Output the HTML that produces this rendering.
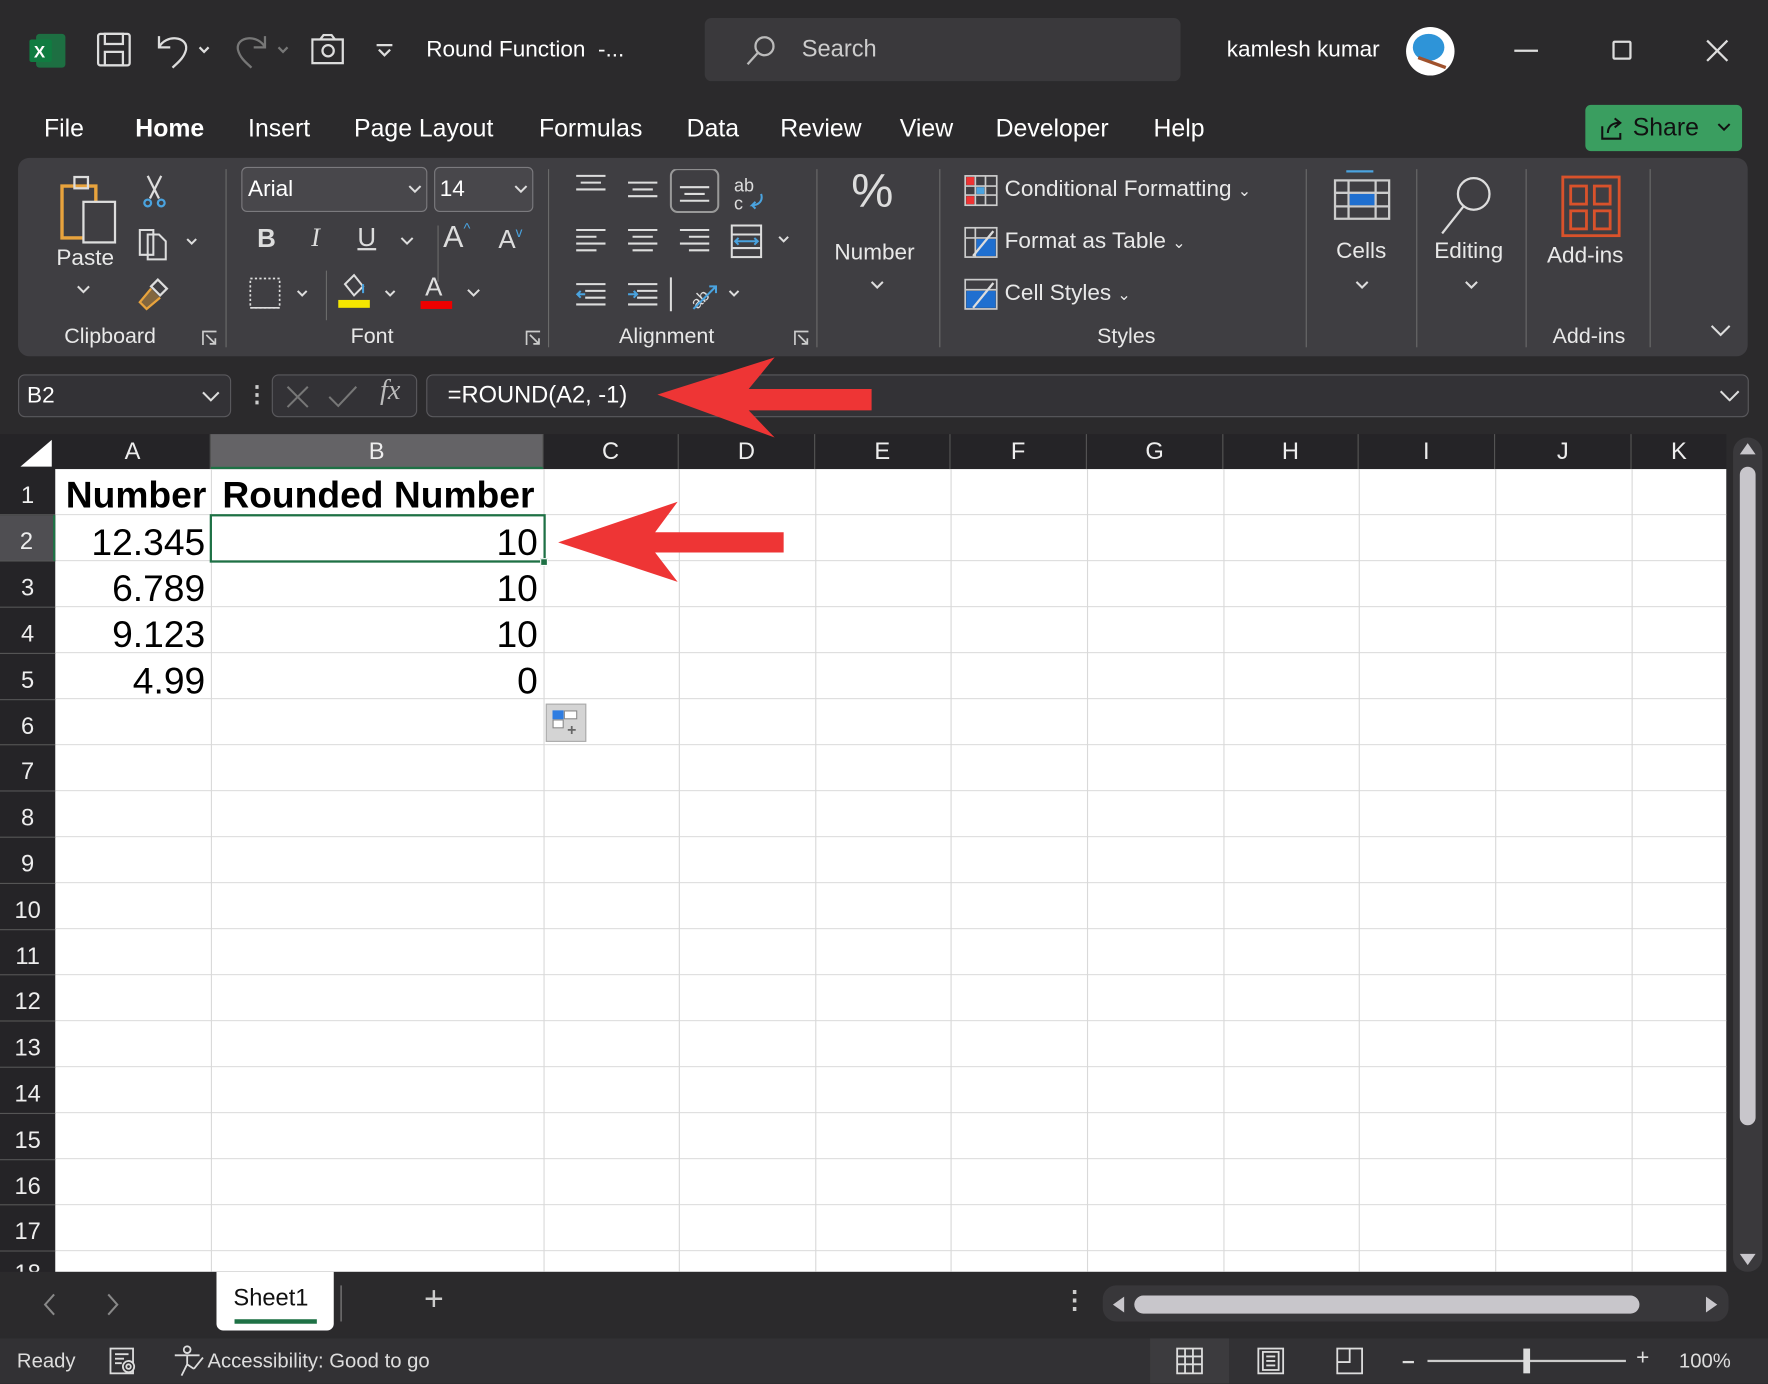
<!DOCTYPE html><html><head><meta charset="utf-8"><style>
*{box-sizing:border-box;margin:0;padding:0}
html,body{width:1768px;height:1384px;overflow:hidden;background:#2b2a2c}
#w{position:absolute;left:0;top:0;width:1568px;height:1227px;transform:scale(1.12755);transform-origin:0 0;background:#2b2a2c;font-family:"Segoe UI","Liberation Sans",sans-serif;color:#fff;overflow:hidden}
.a{position:absolute}
.t{position:absolute;white-space:nowrap}
.m{font-size:22px;top:101px}
.rl{font-size:19px;color:#e8e8e8}
.sep{position:absolute;width:1px;background:#6a6a6a}
.ch{position:absolute;top:385px;height:31px;font-size:21px;text-align:center;line-height:31px;color:#eee;border-right:1px solid #555}
.rh{position:absolute;left:0;width:49px;font-size:21px;text-align:center;color:#eee;border-bottom:1px solid #555}
.c{position:absolute;font-family:"Liberation Sans",Arial,sans-serif;font-size:33px;color:#000;text-align:right;line-height:41px}
</style></head><body><div id="w">
<svg class="a" style="left:26px;top:28px" width="34" height="34"><rect x="6" y="2" width="26" height="30" rx="3" fill="#1d6f42"/><rect x="0" y="7" width="20" height="20" rx="2" fill="#107c41"/><text x="4" y="23" font-size="15" font-family="Liberation Sans" font-weight="bold" fill="#fff">X</text></svg>
<svg class="a" style="left:85px;top:28px" width="32" height="32" fill="none" stroke="#ddd" stroke-width="2"><rect x="2" y="2" width="28" height="28" rx="2"/><rect x="8" y="2" width="16" height="9"/><rect x="8" y="18" width="16" height="12"/></svg>
<svg class="a" style="left:137px;top:28px" width="55" height="34" fill="none" stroke="#ddd" stroke-width="2"><path d="M4 4v10h10M4 14C10 2 30 4 28 16c-2 8-8 12-12 16"/><path d="M40 14l4 4 4-4"/></svg>
<svg class="a" style="left:207px;top:28px" width="55" height="34" fill="none" stroke="#777" stroke-width="2"><path d="M28 4v10H18M28 14C22 2 2 4 4 16c2 8 8 12 12 16"/><path d="M40 14l4 4 4-4"/></svg>
<svg class="a" style="left:276px;top:30px" width="30" height="28" fill="none" stroke="#ddd" stroke-width="2"><rect x="1" y="5" width="27" height="21"/><path d="M8 5l3-4h7l3 4"/><circle cx="15" cy="15" r="5"/></svg>
<svg class="a" style="left:333px;top:38px" width="16" height="14" fill="none" stroke="#ddd" stroke-width="2"><path d="M1 2h14M3 6l5 5 5-5"/></svg>
<div class="t" style="left:378px;top:33px;font-size:20px">Round Function&nbsp; -...</div>
<div class="a" style="left:625px;top:16px;width:422px;height:56px;background:#3a393c;border-radius:6px"></div>
<svg class="a" style="left:660px;top:30px" width="30" height="30" fill="none" stroke="#bbb" stroke-width="2"><circle cx="18" cy="11" r="8"/><path d="M12 17L3 27"/></svg>
<div class="t" style="left:711px;top:32px;font-size:21px;color:#ccc">Search</div>
<div class="t" style="left:1088px;top:33px;font-size:20px">kamlesh kumar</div>
<div class="a" style="left:1247px;top:24px;width:43px;height:43px;border-radius:50%;background:#fff;overflow:hidden"><div class="a" style="left:6px;top:6px;width:28px;height:24px;border-radius:50%;background:#2e94d8"></div><div class="a" style="left:10px;top:30px;width:26px;height:3px;background:#a0522d;transform:rotate(20deg)"></div></div>
<div class="a" style="left:1343px;top:44px;width:21px;height:2px;background:#ddd"></div>
<div class="a" style="left:1430px;top:36px;width:17px;height:17px;border:2px solid #ddd;border-radius:2px"></div>
<svg class="a" style="left:1513px;top:35px" width="20" height="20" stroke="#ddd" stroke-width="2"><path d="M1 1l18 18M19 1L1 19"/></svg>
<div class="t m" style="left:39px">File</div>
<div class="t m" style="left:120px;font-weight:bold">Home</div>
<div class="a" style="left:120px;top:146px;width:66px;height:3px;background:#4fa86e;border-radius:2px"></div>
<div class="t m" style="left:220px">Insert</div>
<div class="t m" style="left:314px">Page Layout</div>
<div class="t m" style="left:478px">Formulas</div>
<div class="t m" style="left:609px">Data</div>
<div class="t m" style="left:692px">Review</div>
<div class="t m" style="left:798px">View</div>
<div class="t m" style="left:883px">Developer</div>
<div class="t m" style="left:1023px">Help</div>
<div class="a" style="left:1406px;top:93px;width:139px;height:41px;background:#3a9e60;border-radius:5px"></div>
<svg class="a" style="left:1418px;top:102px" width="24" height="24" fill="none" stroke="#111" stroke-width="1.8"><path d="M3 10v11h16v-5M8 16c0-6 4-9 10-9M14 3l5 4-5 4"/></svg>
<div class="t" style="left:1448px;top:100px;font-size:22px;color:#111">Share</div>
<svg class="a" style="left:1523px;top:109px" width="12" height="8" fill="none" stroke="#111" stroke-width="1.8"><path d="M1 1l5 5 5-5"/></svg>
<div class="a" style="left:16px;top:140px;width:1534px;height:176px;background:#3f3e42;border-radius:10px"></div>
<svg class="a" style="left:52px;top:155px" width="54" height="62" fill="none"><rect x="3" y="10" width="30" height="46" stroke="#e8a33d" stroke-width="3"/><rect x="14" y="2" width="12" height="10" stroke="#ddd" stroke-width="2"/><rect x="22" y="24" width="28" height="36" fill="#3f3e42" stroke="#ddd" stroke-width="2"/></svg>
<div class="t rl" style="left:50px;top:218px;font-size:20px">Paste</div>
<svg class="a" style="left:68px;top:253px" width="12" height="8" fill="none" stroke="#ddd" stroke-width="1.8"><path d="M1 1l5 5 5-5"/></svg>
<svg class="a" style="left:125px;top:155px" width="24" height="30" fill="none" stroke-width="2"><path d="M6 1l10 20M18 1L8 21" stroke="#ddd"/><circle cx="6" cy="25" r="3" stroke="#4aa3df"/><circle cx="18" cy="25" r="3" stroke="#4aa3df"/></svg>
<svg class="a" style="left:122px;top:200px" width="58" height="32" fill="none" stroke="#ddd" stroke-width="1.8"><path d="M2 4h12v22H2z"/><path d="M9 8h10l6 6v16H9z"/><path d="M44 12l4 4 4-4"/></svg>
<svg class="a" style="left:122px;top:244px" width="30" height="32" fill="none" stroke-width="2"><path d="M18 4l8 8-6 6-8-8z" stroke="#ddd"/><path d="M12 12L2 24l6 6 12-10" stroke="#e8a33d" fill="#e8a33d" fill-opacity=".4"/></svg>
<div class="t rl" style="left:57px;top:288px">Clipboard</div>
<svg class="a" style="left:179px;top:293px" width="14" height="14" fill="none" stroke="#ccc" stroke-width="1.5"><path d="M1 13V1h12M4 4l8 8M7 12h5V7"/></svg>
<div class="sep" style="left:200px;top:150px;height:158px"></div>
<div class="a" style="left:214px;top:148px;width:165px;height:40px;border:1.5px solid #7b7a7e;border-radius:5px;background:#48474b"></div>
<div class="t" style="left:220px;top:157px;font-size:20px">Arial</div>
<svg class="a" style="left:362px;top:164px" width="12" height="8" fill="none" stroke="#ddd" stroke-width="1.8"><path d="M1 1l5 5 5-5"/></svg>
<div class="a" style="left:385px;top:148px;width:88px;height:40px;border:1.5px solid #7b7a7e;border-radius:5px;background:#48474b"></div>
<div class="t" style="left:390px;top:157px;font-size:20px">14</div>
<svg class="a" style="left:456px;top:164px" width="12" height="8" fill="none" stroke="#ddd" stroke-width="1.8"><path d="M1 1l5 5 5-5"/></svg>
<div class="t" style="left:228px;top:198px;font-size:23px;font-weight:bold;color:#ddd">B</div>
<div class="t" style="left:276px;top:198px;font-size:23px;font-style:italic;color:#ddd;font-family:'Liberation Serif',serif">I</div>
<div class="t" style="left:317px;top:197px;font-size:23px;color:#ddd;text-decoration:underline">U</div>
<svg class="a" style="left:355px;top:210px" width="12" height="8" fill="none" stroke="#ddd" stroke-width="1.8"><path d="M1 1l5 5 5-5"/></svg>
<div class="sep" style="left:388px;top:200px;height:50px"></div>
<div class="t" style="left:393px;top:195px;font-size:27px;color:#ddd">A<span style="font-size:13px;vertical-align:top;color:#4aa3df">^</span></div>
<div class="t" style="left:442px;top:199px;font-size:23px;color:#ddd">A<span style="font-size:12px;vertical-align:top;color:#4aa3df">v</span></div>
<svg class="a" style="left:220px;top:244px" width="56" height="32" fill="none" stroke="#ddd" stroke-width="1.5"><rect x="2" y="3" width="26" height="26" stroke-dasharray="2 2"/><path d="M2 29h26"/><path d="M44 14l4 4 4-4" stroke-width="1.8"/></svg>
<div class="sep" style="left:289px;top:240px;height:44px"></div>
<svg class="a" style="left:298px;top:242px" width="60" height="34" fill="none" stroke="#ddd" stroke-width="1.8"><path d="M8 10l8-8 8 10-8 8z"/><path d="M24 10v8" stroke="#4aa3df"/><rect x="2" y="24" width="28" height="7" fill="#f5e600" stroke="none"/><path d="M44 16l4 4 4-4"/></svg>
<div class="t" style="left:377px;top:241px;font-size:23px;color:#ddd">A</div>
<div class="a" style="left:373px;top:267px;width:28px;height:7px;background:#e00"></div>
<svg class="a" style="left:414px;top:256px" width="12" height="8" fill="none" stroke="#ddd" stroke-width="1.8"><path d="M1 1l5 5 5-5"/></svg>
<div class="t rl" style="left:311px;top:288px">Font</div>
<svg class="a" style="left:466px;top:293px" width="14" height="14" fill="none" stroke="#ccc" stroke-width="1.5"><path d="M1 13V1h12M4 4l8 8M7 12h5V7"/></svg>
<div class="sep" style="left:486px;top:150px;height:158px"></div>
<svg class="a" style="left:505px;top:150px" width="200" height="130" fill="none" stroke="#ddd" stroke-width="1.8">
<path d="M6 6h26M10 12h18M6 18h26"/><path d="M52 12h26M56 18h18M52 24h26"/>
<rect x="90" y="0" width="42" height="38" rx="6" stroke="#999"/><path d="M98 16h26M102 22h18M98 28h26"/>
<text x="146" y="20" font-size="16" fill="#ddd" stroke="none" font-family="Liberation Sans">ab</text><text x="146" y="36" font-size="16" fill="#ddd" stroke="none" font-family="Liberation Sans">c</text><path d="M170 22c2 6-2 10-8 10l3-3m-3 3l3 3" stroke="#4aa3df"/>
<path d="M6 54h26M6 60h18M6 66h26M6 72h18"/><path d="M52 54h26M56 60h18M52 66h26M56 72h18"/><path d="M98 54h26M106 60h18M98 66h26M106 72h18"/>
<rect x="144" y="50" width="26" height="28" stroke="#ddd"/><path d="M144 58h26M144 70h26" stroke="#ddd"/><path d="M148 64h18M150 61l-3 3 3 3M164 61l3 3-3 3" stroke="#4aa3df"/><path d="M186 60l4 4 4-4"/>
<path d="M6 102h26M14 108h18M14 114h18M6 120h26"/><path d="M14 111l-7 0m3-3l-3 3 3 3" stroke="#4aa3df"/>
<path d="M52 102h26M60 108h18M60 114h18M52 120h26"/><path d="M52 111h8m-3-3l3 3-3 3" stroke="#4aa3df"/>
<path d="M90 96v30"/><text x="104" y="122" font-size="15" fill="#ddd" stroke="none" transform="rotate(-45 112 112)" font-family="Liberation Sans">ab</text><path d="M110 124l20-20m-6 0h6v6" stroke="#4aa3df"/><path d="M142 108l4 4 4-4"/>
</svg>
<div class="t rl" style="left:549px;top:288px">Alignment</div>
<svg class="a" style="left:704px;top:293px" width="14" height="14" fill="none" stroke="#ccc" stroke-width="1.5"><path d="M1 13V1h12M4 4l8 8M7 12h5V7"/></svg>
<div class="sep" style="left:724px;top:150px;height:158px"></div>
<div class="t" style="left:755px;top:145px;font-size:42px;color:#ddd;font-weight:300">%</div>
<div class="t rl" style="left:740px;top:213px;font-size:20px">Number</div>
<svg class="a" style="left:772px;top:249px" width="12" height="8" fill="none" stroke="#ddd" stroke-width="1.8"><path d="M1 1l5 5 5-5"/></svg>
<div class="sep" style="left:833px;top:150px;height:158px"></div>
<svg class="a" style="left:855px;top:155px" width="30" height="125" fill="none" stroke="#ccc" stroke-width="1.5">
<rect x="1" y="1" width="28" height="26"/><path d="M1 10h28M1 18h28M10 1v26M19 1v26"/><rect x="2" y="2" width="7" height="7" fill="#e33" stroke="none"/><rect x="2" y="19" width="7" height="7" fill="#e33" stroke="none"/><rect x="11" y="11" width="7" height="6" fill="#4aa3df" stroke="none"/>
<rect x="1" y="47" width="28" height="26"/><path d="M1 56h28M10 47v26"/><rect x="11" y="57" width="17" height="15" fill="#1f6fd0" stroke="none"/><path d="M26 50L8 72" stroke="#ddd" stroke-width="2"/>
<rect x="1" y="93" width="28" height="26"/><path d="M1 102h28"/><rect x="2" y="103" width="26" height="15" fill="#1f6fd0" stroke="none"/><path d="M26 96L8 118" stroke="#ddd" stroke-width="2"/>
</svg>
<div class="t rl" style="left:891px;top:157px;font-size:20px">Conditional Formatting <span style="font-size:14px">&#8964;</span></div>
<div class="t rl" style="left:891px;top:203px;font-size:20px">Format as Table <span style="font-size:14px">&#8964;</span></div>
<div class="t rl" style="left:891px;top:249px;font-size:20px">Cell Styles <span style="font-size:14px">&#8964;</span></div>
<div class="t rl" style="left:973px;top:288px">Styles</div>
<div class="sep" style="left:1158px;top:150px;height:158px"></div>
<svg class="a" style="left:1182px;top:150px" width="52" height="48" fill="none" stroke="#ccc" stroke-width="2"><path d="M12 2h24" stroke="#4aa3df"/><rect x="2" y="10" width="48" height="34"/><path d="M2 21h48M2 33h48M14 10v34M38 10v34"/><rect x="15" y="22" width="22" height="10" fill="#1f6fd0" stroke="none"/></svg>
<div class="t rl" style="left:1185px;top:212px;font-size:20px">Cells</div>
<svg class="a" style="left:1202px;top:249px" width="12" height="8" fill="none" stroke="#ddd" stroke-width="1.8"><path d="M1 1l5 5 5-5"/></svg>
<div class="sep" style="left:1256px;top:150px;height:158px"></div>
<svg class="a" style="left:1275px;top:150px" width="60" height="60" fill="none" stroke="#ddd" stroke-width="2"><circle cx="32" cy="22" r="14"/><path d="M23 33L4 57"/></svg>
<div class="t rl" style="left:1272px;top:212px;font-size:20px">Editing</div>
<svg class="a" style="left:1299px;top:249px" width="12" height="8" fill="none" stroke="#ddd" stroke-width="1.8"><path d="M1 1l5 5 5-5"/></svg>
<div class="sep" style="left:1353px;top:150px;height:158px"></div>
<svg class="a" style="left:1384px;top:155px" width="54" height="56" fill="none" stroke="#d9522b" stroke-width="2.5"><rect x="2" y="2" width="50" height="52"/><rect x="9" y="10" width="14" height="16"/><rect x="30" y="10" width="14" height="16"/><rect x="9" y="32" width="14" height="16"/><rect x="30" y="32" width="14" height="16"/></svg>
<div class="t rl" style="left:1372px;top:216px;font-size:20px">Add-ins</div>
<div class="t rl" style="left:1377px;top:288px">Add-ins</div>
<div class="sep" style="left:1463px;top:150px;height:158px"></div>
<svg class="a" style="left:1517px;top:287px" width="18" height="12" fill="none" stroke="#ddd" stroke-width="1.8"><path d="M1 2l8 8 8-8"/></svg>
<div class="a" style="left:16px;top:332px;width:189px;height:38px;border:1.5px solid #5a595d;border-radius:6px;background:#333236"></div>
<div class="t" style="left:24px;top:340px;font-size:20px">B2</div>
<svg class="a" style="left:179px;top:347px" width="16" height="10" fill="none" stroke="#ddd" stroke-width="1.8"><path d="M1 1l7 7 7-7"/></svg>
<div class="t" style="left:218px;top:337px;font-size:20px;color:#ccc;font-weight:bold">&#8942;</div>
<div class="a" style="left:241px;top:332px;width:129px;height:38px;border:1.5px solid #5a595d;border-radius:6px;background:#333236"></div>
<svg class="a" style="left:252px;top:340px" width="70" height="24" fill="none" stroke="#777" stroke-width="1.8"><path d="M3 3l18 18M21 3L3 21M40 12l8 8 16-17"/></svg>
<div class="t" style="left:337px;top:333px;font-size:25px;font-style:italic;color:#bbb;font-family:'Liberation Serif',serif">fx</div>
<div class="a" style="left:378px;top:332px;width:1173px;height:38px;border:1.5px solid #5a595d;border-radius:6px;background:#333236"></div>
<div class="t" style="left:397px;top:339px;font-size:21px">=ROUND(A2, -1)</div>
<svg class="a" style="left:1525px;top:346px" width="18" height="10" fill="none" stroke="#ddd" stroke-width="1.8"><path d="M1 1l8 8 8-8"/></svg>
<div class="a" style="left:0;top:385px;width:1531px;height:743px;background:#252427"></div>
<div class="a" style="left:49px;top:416px;width:1482px;height:712px;background:#fff;
background-image:linear-gradient(#d9d9d9 1px,transparent 1px);background-size:100% 40.8px;background-position:0 40px"></div>
<svg class="a" style="left:18px;top:390px" width="28" height="24"><path d="M28 0V24H0z" fill="#fff"/></svg>
<div class="ch" style="left:49px;width:138px">A</div>
<div class="ch" style="left:187px;width:295px;background:#646366;border-bottom:2px solid #1e7145">B</div>
<div class="ch" style="left:482px;width:120px">C</div>
<div class="ch" style="left:602px;width:121px">D</div>
<div class="ch" style="left:723px;width:120px">E</div>
<div class="ch" style="left:843px;width:121px">F</div>
<div class="ch" style="left:964px;width:121px">G</div>
<div class="ch" style="left:1085px;width:120px">H</div>
<div class="ch" style="left:1205px;width:121px">I</div>
<div class="ch" style="left:1326px;width:121px">J</div>
<div class="ch" style="left:1447px;width:84px;border-right:none">K</div>
<svg class="a" style="left:49px;top:416px" width="1482" height="712"><g stroke="#d9d9d9" stroke-width="1">
<path d="M138.5 0v712M433.5 0v712M553.5 0v712M674.5 0v712M794.5 0v712M915.5 0v712M1036.5 0v712M1156.5 0v712M1277.5 0v712M1398.5 0v712"/></g></svg>
<div class="rh" style="top:416px;height:41px;line-height:48px">1</div>
<div class="rh" style="top:457px;height:41px;line-height:48px;background:#4f4e52;border-right:2px solid #1e7145">2</div>
<div class="rh" style="top:498px;height:41px;line-height:48px">3</div>
<div class="rh" style="top:539px;height:41px;line-height:48px">4</div>
<div class="rh" style="top:580px;height:41px;line-height:48px">5</div>
<div class="rh" style="top:621px;height:40px;line-height:48px">6</div>
<div class="rh" style="top:661px;height:41px;line-height:48px">7</div>
<div class="rh" style="top:702px;height:41px;line-height:48px">8</div>
<div class="rh" style="top:743px;height:41px;line-height:48px">9</div>
<div class="rh" style="top:784px;height:41px;line-height:48px">10</div>
<div class="rh" style="top:825px;height:40px;line-height:48px">11</div>
<div class="rh" style="top:865px;height:41px;line-height:48px">12</div>
<div class="rh" style="top:906px;height:41px;line-height:48px">13</div>
<div class="rh" style="top:947px;height:41px;line-height:48px">14</div>
<div class="rh" style="top:988px;height:41px;line-height:48px">15</div>
<div class="rh" style="top:1029px;height:40px;line-height:48px">16</div>
<div class="rh" style="top:1069px;height:41px;line-height:48px">17</div>
<div class="rh" style="top:1110px;height:18px;line-height:40px;overflow:hidden;border:none">18</div>
<div class="c" style="left:45px;top:418px;width:138px;font-weight:bold">Number</div>
<div class="c" style="left:187px;top:418px;width:287px;font-weight:bold">Rounded Number</div>
<div class="c" style="left:45px;top:460px;width:137px">12.345</div>
<div class="c" style="left:45px;top:501px;width:137px">6.789</div>
<div class="c" style="left:45px;top:542px;width:137px">9.123</div>
<div class="c" style="left:45px;top:583px;width:137px">4.99</div>
<div class="c" style="left:187px;top:460px;width:290px">10</div>
<div class="c" style="left:187px;top:501px;width:290px">10</div>
<div class="c" style="left:187px;top:542px;width:290px">10</div>
<div class="c" style="left:187px;top:583px;width:290px">0</div>
<div class="a" style="left:186px;top:456px;width:298px;height:43px;border:2.5px solid #1e7145"></div>
<div class="a" style="left:479px;top:495px;width:7px;height:7px;background:#1e7145;border:1px solid #fff"></div>
<div class="a" style="left:484px;top:624px;width:36px;height:34px;background:#d4d4d4;border:1px solid #aaa"></div>
<div class="a" style="left:490px;top:630px;width:10px;height:8px;background:#2f7de1"></div>
<div class="a" style="left:500px;top:630px;width:12px;height:8px;background:#fff;border:1px solid #888"></div>
<div class="a" style="left:490px;top:638px;width:10px;height:8px;background:#fff;border:1px solid #888"></div>
<div class="t" style="left:503px;top:639px;font-size:14px;color:#666;font-weight:bold">+</div>
<div class="a" style="left:1537px;top:388px;width:26px;height:740px;background:#3a393c;border-radius:13px"></div>
<svg class="a" style="left:1541px;top:391px" width="18" height="14"><path d="M9 2l7 10H2z" fill="#c8c6cb"/></svg>
<div class="a" style="left:1543px;top:414px;width:14px;height:584px;background:#c8c6cb;border-radius:7px"></div>
<svg class="a" style="left:1541px;top:1110px" width="18" height="14"><path d="M9 12l7-10H2z" fill="#c8c6cb"/></svg>
<svg class="a" style="left:0;top:0" width="1568" height="1227"><g fill="#ee3535">
<path d="M583 350L687 317L664 345L773 345L773 364L664 364L687 388Z"/>
<path d="M495 481L601 445L581 472L695 472L695 490L581 490L601 516Z"/></g></svg>
<div class="a" style="left:0;top:1128px;width:1568px;height:57px;background:#2b2a2c"></div>
<svg class="a" style="left:36px;top:1146px" width="80" height="22" fill="none" stroke="#888" stroke-width="1.8"><path d="M12 2L4 11l8 9M60 2l8 9-8 9"/></svg>
<div class="a" style="left:192px;top:1128px;width:104px;height:52px;background:#fff;border-radius:0 0 6px 6px"></div>
<div class="t" style="left:207px;top:1140px;font-size:21px;color:#111">Sheet1</div>
<div class="a" style="left:208px;top:1170px;width:73px;height:4px;background:#1e7145"></div>
<div class="a" style="left:302px;top:1140px;width:1px;height:32px;background:#888"></div>
<div class="t" style="left:376px;top:1136px;font-size:30px;color:#ccc;font-weight:300">+</div>
<div class="t" style="left:942px;top:1140px;font-size:22px;color:#ccc;font-weight:bold">&#8942;</div>
<div class="a" style="left:978px;top:1140px;width:555px;height:32px;background:#38373a;border-radius:12px"></div>
<svg class="a" style="left:984px;top:1148px" width="16" height="18"><path d="M3 9l10-7v14z" fill="#c8c6cb"/></svg>
<div class="a" style="left:1006px;top:1149px;width:448px;height:16px;background:#c8c6cb;border-radius:8px"></div>
<svg class="a" style="left:1510px;top:1148px" width="16" height="18"><path d="M13 9L3 2v14z" fill="#c8c6cb"/></svg>
<div class="a" style="left:0;top:1187px;width:1568px;height:40px;background:#323134"></div>
<div class="t" style="left:15px;top:1197px;font-size:18px;color:#ddd">Ready</div>
<svg class="a" style="left:96px;top:1193px" width="28" height="28" fill="none" stroke="#ddd" stroke-width="1.6"><rect x="2" y="3" width="20" height="22"/><path d="M6 8h12M6 12h8M6 16h6"/><circle cx="18" cy="19" r="5" fill="#323134"/><circle cx="18" cy="19" r="2"/></svg>
<svg class="a" style="left:152px;top:1193px" width="30" height="30" fill="none" stroke="#ddd" stroke-width="1.6"><circle cx="14" cy="4" r="3"/><path d="M3 9h22M14 9v8l-5 10M14 17l6 4M20 21l8-10"/></svg>
<div class="t" style="left:184px;top:1197px;font-size:18px;color:#ddd">Accessibility: Good to go</div>
<div class="a" style="left:1020px;top:1187px;width:70px;height:40px;background:#3c3b3e"></div>
<svg class="a" style="left:1042px;top:1194px" width="26" height="26" fill="none" stroke="#ddd" stroke-width="1.6"><rect x="2" y="2" width="22" height="22"/><path d="M2 9h22M2 16h22M9 2v22M16 2v22"/></svg>
<svg class="a" style="left:1114px;top:1194px" width="26" height="26" fill="none" stroke="#ddd" stroke-width="1.6"><rect x="2" y="2" width="22" height="22"/><rect x="6" y="5" width="14" height="16"/><path d="M9 9h8M9 13h8M9 17h8"/></svg>
<svg class="a" style="left:1184px;top:1194px" width="26" height="26" fill="none" stroke="#ddd" stroke-width="1.6"><rect x="2" y="2" width="22" height="22"/><path d="M13 2v12H2"/></svg>
<div class="a" style="left:1244px;top:1207px;width:10px;height:1.5px;background:#ddd"></div>
<div class="a" style="left:1266px;top:1206px;width:176px;height:2px;background:#ccc"></div>
<div class="a" style="left:1351px;top:1196px;width:6px;height:22px;background:#ddd"></div>
<div class="t" style="left:1451px;top:1193px;font-size:20px;color:#ddd">+</div>
<div class="t" style="left:1489px;top:1197px;font-size:18px;color:#ddd">100%</div>
</div></body></html>
